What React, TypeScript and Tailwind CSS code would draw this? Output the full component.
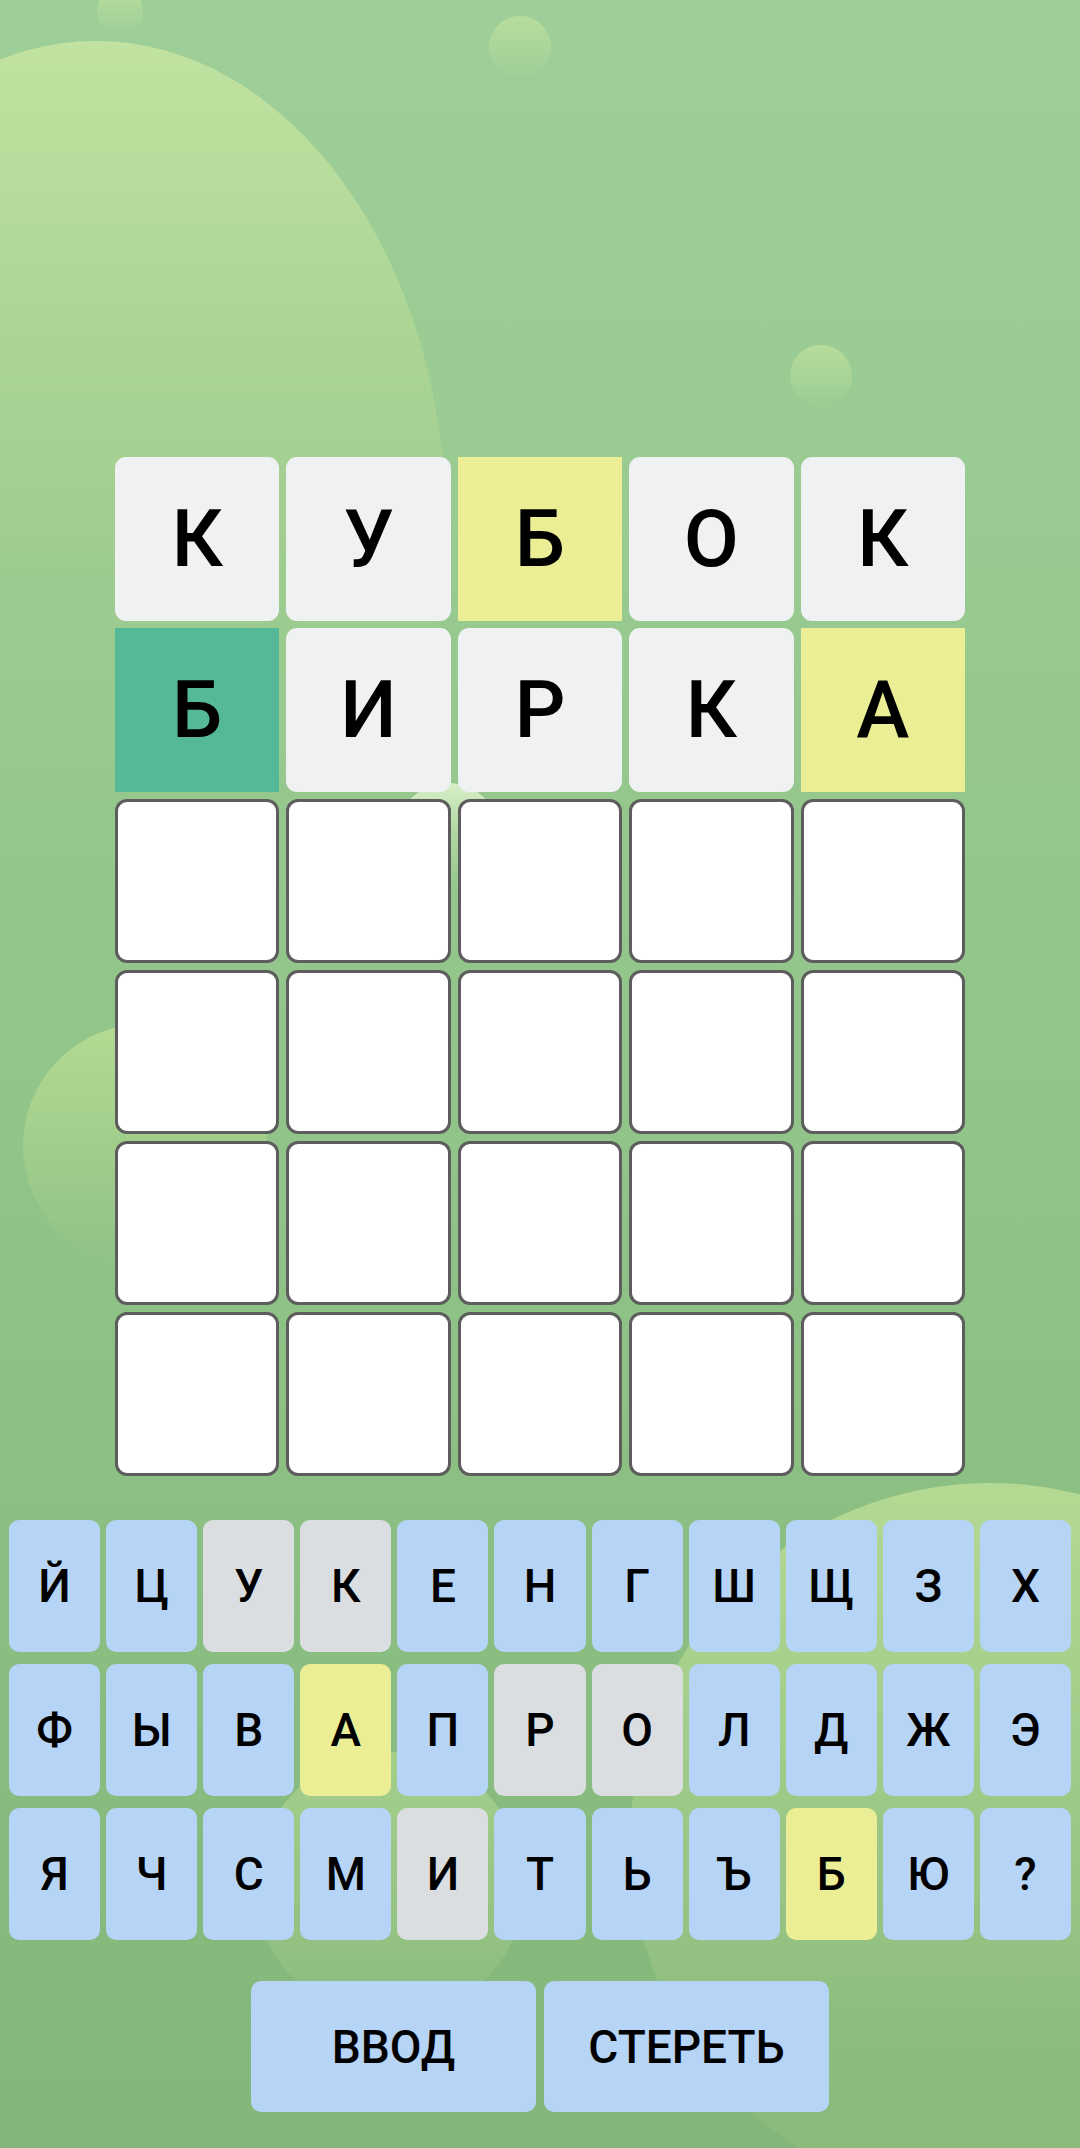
import React from "react";

type St = "g" | "y" | "t" | "e";

const gridRows: { l: string; s: St }[][] = [
  [
    { l: "К", s: "g" },
    { l: "У", s: "g" },
    { l: "Б", s: "y" },
    { l: "О", s: "g" },
    { l: "К", s: "g" },
  ],
  [
    { l: "Б", s: "t" },
    { l: "И", s: "g" },
    { l: "Р", s: "g" },
    { l: "К", s: "g" },
    { l: "А", s: "y" },
  ],
];

const kb: string[][] = [
  ["Й", "Ц", "У", "К", "Е", "Н", "Г", "Ш", "Щ", "З", "Х"],
  ["Ф", "Ы", "В", "А", "П", "Р", "О", "Л", "Д", "Ж", "Э"],
  ["Я", "Ч", "С", "М", "И", "Т", "Ь", "Ъ", "Б", "Ю", "?"],
];

const grayKeys = new Set(["У", "К", "Р", "О", "И"]);
const yellowKeys = new Set(["А", "Б"]);

function Tile({ l, s }: { l?: string; s: St }) {
  if (s === "e") {
    return (
      <div className="h-[164px] rounded-[12px] border-[3px] border-[#5d5d5d] bg-white" />
    );
  }
  const cls =
    s === "g"
      ? "bg-[#eff1f3] rounded-[11px]"
      : s === "y"
      ? "bg-[#ebee95]"
      : "bg-[#55b896]";
  return (
    <div
      className={`h-[164px] flex items-center justify-center ${cls} text-[80px] font-medium text-black leading-none`}
    >
      {l}
    </div>
  );
}

function Key({ l }: { l: string }) {
  const bg = grayKeys.has(l)
    ? "bg-[#dadee1]"
    : yellowKeys.has(l)
    ? "bg-[#ebee95]"
    : "bg-[#b6d4f6]";
  return (
    <div
      className={`h-[132px] rounded-[10px] flex items-center justify-center ${bg} text-[46px] font-medium text-black leading-none`}
    >
      {l}
    </div>
  );
}

export default function App() {
  const rows: { l?: string; s: St }[][] = [
    ...gridRows,
    ...Array.from({ length: 4 }, () =>
      Array.from({ length: 5 }, () => ({ s: "e" as St }))
    ),
  ];
  return (
    <div className="relative w-full h-[2148px] overflow-hidden bg-[linear-gradient(180deg,#9fcf99_0%,#92c589_50%,#83b679_100%)] font-['Roboto','Noto_Sans',sans-serif]">
      {/* decorative background shapes */}
      <div className="absolute left-[-254px] top-[41px] w-[700px] h-[968px] rounded-[50%] bg-[linear-gradient(180deg,rgba(193,226,160,1)_0%,rgba(178,216,148,0.75)_30%,rgba(168,208,142,0.35)_55%,rgba(168,208,142,0)_80%)]" />
      <div className="absolute left-[97px] top-[-12px] w-[46px] h-[46px] rounded-full bg-[linear-gradient(180deg,rgba(185,222,155,0.95)_0%,rgba(185,222,155,0)_100%)]" />
      <div className="absolute left-[489px] top-[16px] w-[62px] h-[62px] rounded-full bg-[linear-gradient(180deg,rgba(185,222,155,0.95)_0%,rgba(185,222,155,0)_100%)]" />
      <div className="absolute left-[790px] top-[345px] w-[62px] h-[62px] rounded-full bg-[linear-gradient(180deg,rgba(185,222,155,0.95)_0%,rgba(185,222,155,0)_100%)]" />
      <div className="absolute left-[396px] top-[783px] w-[104px] h-[104px] rounded-full bg-[linear-gradient(180deg,rgba(215,238,200,1)_0%,rgba(200,230,180,0.5)_50%,rgba(200,230,180,0)_100%)]" />
      <div className="absolute left-[23px] top-[1024px] w-[244px] h-[244px] rounded-full bg-[linear-gradient(180deg,rgba(180,218,146,1)_0%,rgba(172,212,142,0.6)_50%,rgba(160,205,140,0)_100%)]" />
      <div className="absolute left-[630px] top-[1483px] w-[720px] h-[720px] rounded-full bg-[linear-gradient(180deg,rgba(180,217,147,1)_0%,rgba(170,210,140,0.6)_45%,rgba(160,200,135,0.25)_80%)]" />
      <div className="absolute left-[256px] top-[1752px] w-[268px] h-[268px] rounded-full bg-[linear-gradient(180deg,rgba(168,208,140,0.9)_0%,rgba(160,202,136,0.5)_70%,rgba(160,202,136,0.2)_100%)]" />

      <div className="relative flex flex-col items-center pt-[457px]">
        <div className="grid grid-cols-5 gap-x-[7px] gap-y-[7px] w-[850px]">
          {rows.map((r, i) =>
            r.map((t, j) => <Tile key={`${i}-${j}`} l={t.l} s={t.s} />)
          )}
        </div>

        <div className="mt-[44px] w-full px-[9px] flex flex-col gap-y-[12px]">
          {kb.map((r, i) => (
            <div key={i} className="grid grid-cols-11 gap-x-[6px]">
              {r.map((l) => (
                <Key key={l} l={l} />
              ))}
            </div>
          ))}
        </div>

        <div className="mt-[41px] flex gap-x-[8px]">
          <div className="w-[285px] h-[131px] rounded-[10px] bg-[#b6d4f6] flex items-center justify-center text-[46px] font-medium text-black leading-none">
            ВВОД
          </div>
          <div className="w-[285px] h-[131px] rounded-[10px] bg-[#b6d4f6] flex items-center justify-center text-[46px] font-medium text-black leading-none">
            СТЕРЕТЬ
          </div>
        </div>
      </div>
    </div>
  );
}
